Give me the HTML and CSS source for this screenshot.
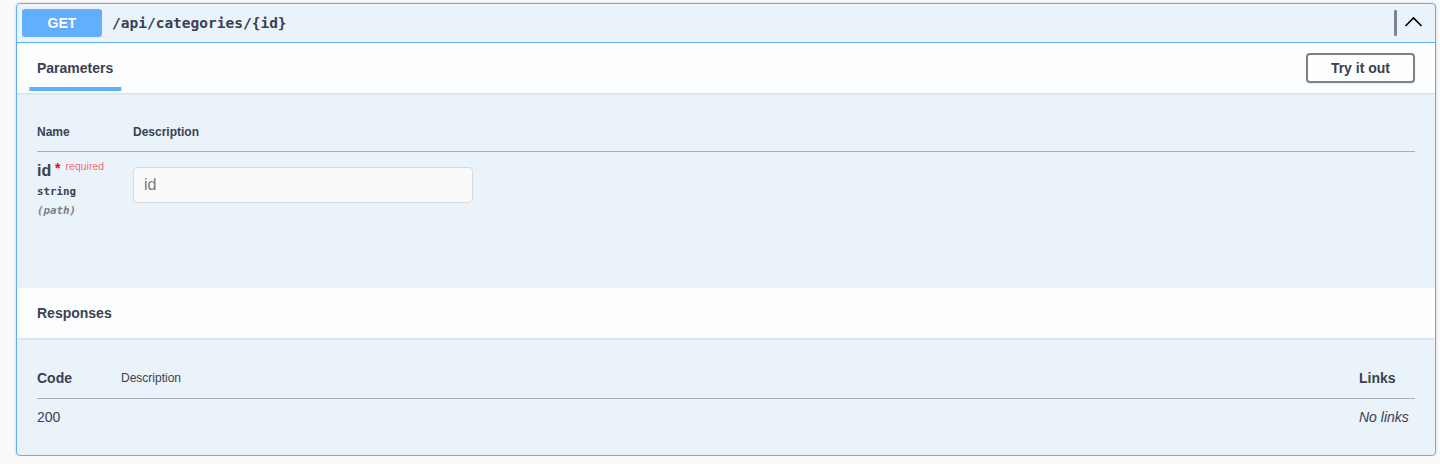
FILE: index.html
```html
<!DOCTYPE html>
<html lang="en">
<head>
<meta charset="utf-8">
<title>GET /api/categories/{id}</title>
<link rel="stylesheet" href="styles.css">
</head>
<body>
<div class="opblock">
  <div class="summary">
    <span class="method">GET</span>
    <span class="path">/api/categories/{id}</span>
    <span class="spacer"></span>
    <span class="copy-bar"></span>
    <svg class="arrow" width="20" height="20" viewBox="0 0 20 20"><polyline points="1.5,13 9.5,5 17.5,13" fill="none" stroke="#000" stroke-width="1.6"/></svg>
  </div>

  <div class="section-header">
    <div class="tab-item"><h4><span>Parameters</span></h4></div>
    <button class="try-out">Try it out</button>
  </div>
  <div class="table-container">
    <table class="params">
      <thead>
        <tr><th class="col-name">Name</th><th>Description</th></tr>
      </thead>
      <tbody>
        <tr>
          <td class="col-name">
            <div class="param-name">id<span class="star">&nbsp;*</span><span class="req">required</span></div>
            <div class="param-type">string</div>
            <div class="param-in">(path)</div>
          </td>
          <td><input class="param-input" type="text" placeholder="id"></td>
        </tr>
      </tbody>
    </table>
  </div>

  <div class="section-header responses-header">
    <h4>Responses</h4>
  </div>
  <div class="table-container">
    <table class="responses">
      <thead>
        <tr><th class="col-code">Code</th><th class="col-desc">Description</th><th class="col-links">Links</th></tr>
      </thead>
      <tbody>
        <tr><td class="col-code">200</td><td></td><td class="col-links"><i>No links</i></td></tr>
      </tbody>
    </table>
  </div>
</div>
</body>
</html>
```

FILE: styles.css
```css
* { box-sizing: border-box; }
html, body { margin: 0; }
body {
  background: #fafafa;
  padding: 3px 4px 0 16px;
  font-family: "Liberation Sans", Arial, sans-serif;
  color: #3b4151;
}
.opblock {
  width: 1420px;
  border: 1px solid #61affe;
  border-radius: 4px;
  background: rgba(97, 175, 254, 0.1);
  box-shadow: 0 0 3px rgba(0, 0, 0, 0.19);
}
.summary {
  display: flex;
  align-items: center;
  padding: 5px;
  border-bottom: 1px solid #61affe;
}
.method {
  display: inline-block;
  min-width: 80px;
  padding: 6px 0;
  line-height: 16px;
  font-size: 14px;
  font-weight: 700;
  text-align: center;
  color: #fff;
  background: #61affe;
  border-radius: 3px;
  text-shadow: 0 1px 0 rgba(0, 0, 0, 0.1);
}
.path {
  padding: 0 10px;
  font-family: "DejaVu Sans Mono", monospace;
  font-size: 14.5px;
  font-weight: 700;
  color: #3b4151;
}
.spacer { flex: 1; }
.copy-bar {
  width: 3px;
  height: 26px;
  background: #7e8290;
  border-radius: 1px;
  margin-right: 7px;
}
.arrow { display: block; margin-right: 6px; }

.section-header {
  display: flex;
  align-items: center;
  min-height: 50px;
  padding: 8px 20px;
  background: rgba(255, 255, 255, 0.8);
  box-shadow: 0 1px 2px rgba(0, 0, 0, 0.1);
}
.section-header h4 {
  margin: 0;
  font-size: 14px;
  font-weight: 700;
  line-height: 16px;
}
.tab-item { flex: 1; }
.tab-item span { position: relative; }
.tab-item span::after {
  content: "";
  position: absolute;
  left: 50%;
  bottom: -15px;
  width: 120%;
  height: 4px;
  transform: translateX(-50%);
  background: #61affe;
}
.try-out {
  font-family: "Liberation Sans", Arial, sans-serif;
  font-size: 14px;
  font-weight: 700;
  line-height: 16px;
  color: #3b4151;
  background: transparent;
  border: 2px solid gray;
  border-radius: 4px;
  padding: 5px 23px;
  box-shadow: 0 1px 2px rgba(0, 0, 0, 0.1);
}

.table-container { padding: 20px; }
table { width: 100%; border-collapse: collapse; }
th {
  text-align: left;
  padding: 12px 0;
  font-size: 12px;
  font-weight: 700;
  line-height: 14px;
  border-bottom: 1px solid #a9afba;
}
td { vertical-align: top; padding: 10px 0 0; }

.params .col-name { width: 96px; }
.params td { padding-bottom: 50px; }
.param-name {
  font-size: 16px;
  font-weight: 700;
  line-height: 18px;
}
.star { color: red; font-size: 14px; line-height: 0; vertical-align: 3px; }
.req {
  font-size: 10.5px;
  font-weight: 400;
  line-height: 0;
  color: rgba(255, 0, 0, 0.6);
  padding: 0 5px;
  vertical-align: 6px;
}
.param-type {
  font-family: "DejaVu Sans Mono", monospace;
  font-size: 10.8px;
  font-weight: 700;
  line-height: 14px;
  padding: 5px 0;
}
.param-in {
  font-family: "DejaVu Sans Mono", monospace;
  font-size: 10.8px;
  font-weight: 700;
  font-style: italic;
  line-height: 14px;
  color: #808080;
}
.param-input {
  display: block;
  width: 340px;
  margin: 5px 0;
  padding: 8px 10px;
  font-family: "Liberation Sans", Arial, sans-serif;
  font-size: 16px;
  line-height: 18px;
  border: 1px solid #d9d9d9;
  border-radius: 4px;
  background: #fafafa;
  color: #3b4151;
}
.param-input::placeholder { color: #7a7a7a; }

.responses th.col-code { width: 84px; font-size: 14px; line-height: 16px; }
.responses th.col-desc { font-weight: 400; }
.responses th.col-links { width: 56px; font-size: 14px; line-height: 16px; }
.responses td { font-size: 14px; line-height: 16px; padding-bottom: 10px; }
```
